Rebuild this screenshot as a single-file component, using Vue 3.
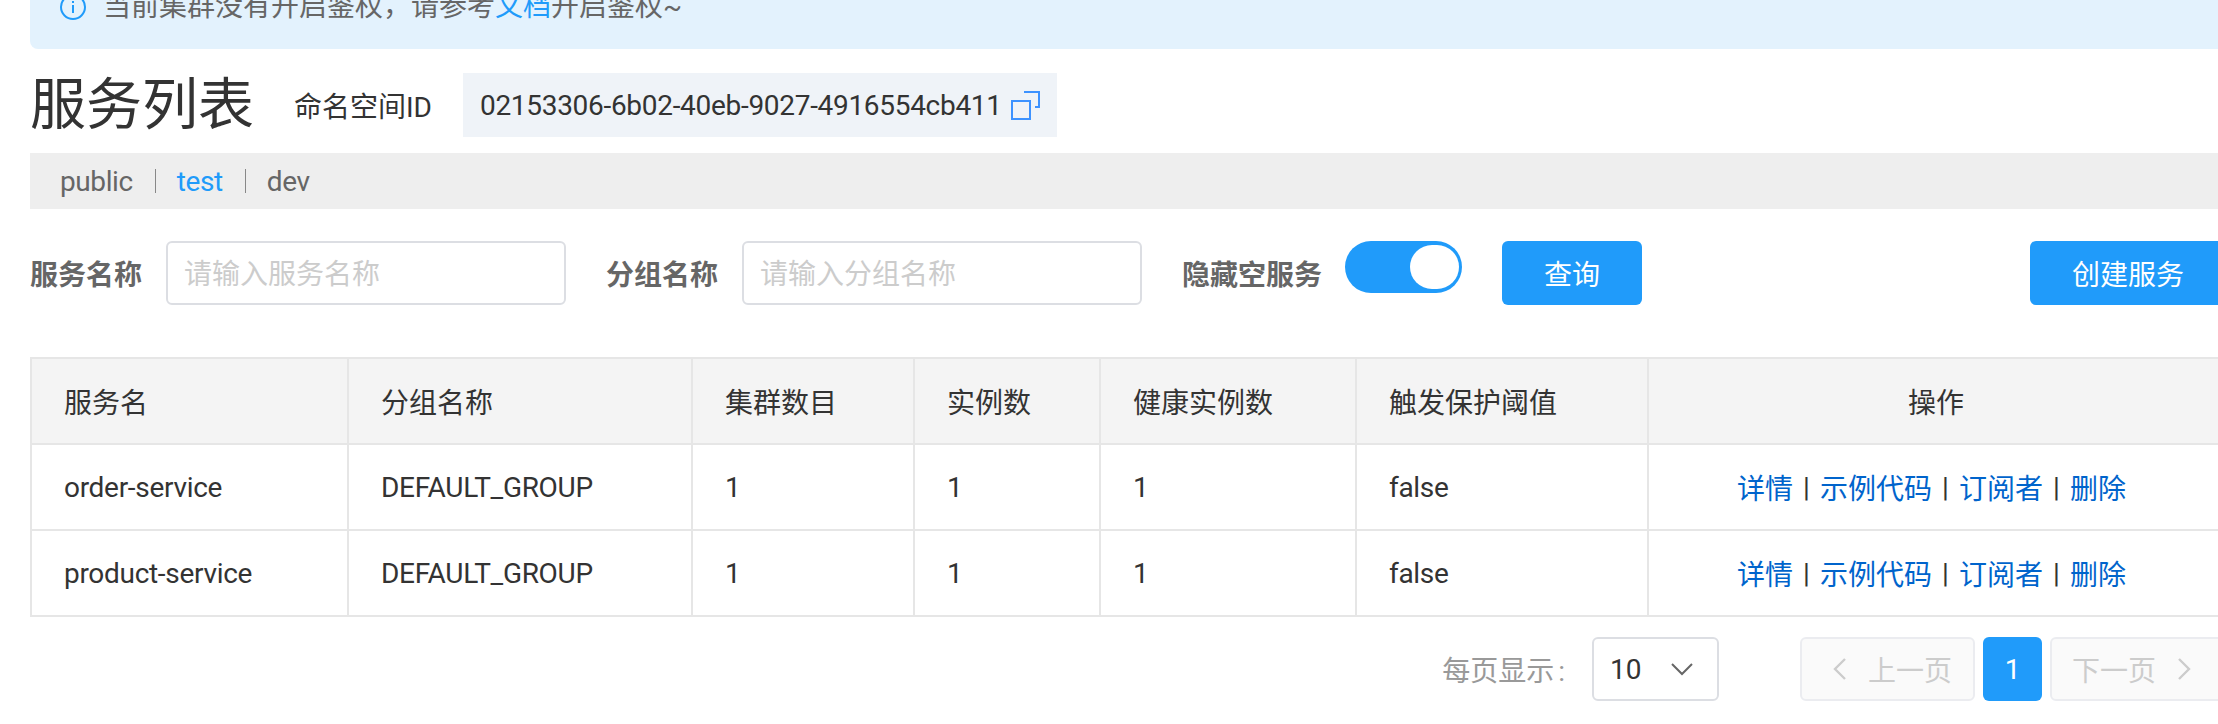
<script setup>
const columns = [
  { label: '服务名', width: 317 },
  { label: '分组名称', width: 344 },
  { label: '集群数目', width: 222 },
  { label: '实例数', width: 186 },
  { label: '健康实例数', width: 256 },
  { label: '触发保护阈值', width: 292 },
  { label: '操作', width: 579, center: true }
]
const rows = [
  { name: 'order-service', group: 'DEFAULT_GROUP', clusters: 1, instances: 1, healthy: 1, threshold: 'false' },
  { name: 'product-service', group: 'DEFAULT_GROUP', clusters: 1, instances: 1, healthy: 1, threshold: 'false' }
]
const ops = ['详情', '示例代码', '订阅者', '删除']
</script>

<template>
  <div class="viewport">
    <div class="page">
      <div class="banner">
        <svg class="info" width="26" height="26" viewBox="0 0 26 26" fill="none" stroke="#209bfa" stroke-width="2">
          <circle cx="13" cy="13" r="12" />
          <path d="M13 11v8M13 7v2" />
        </svg>
        <span>当前集群没有开启鉴权，请参考<a class="doc">文档</a>开启鉴权~</span>
      </div>

      <div class="head">
        <h1 class="title">服务列表</h1>
        <span class="ns-label">命名空间ID</span>
        <div class="ns-box">
          <span class="latin">02153306-6b02-40eb-9027-4916554cb411</span>
          <svg class="copy" width="29" height="30" viewBox="0 0 29 30" fill="none" stroke="#3d92ff" stroke-width="2">
            <path d="M13 2h15v15h-4" />
            <rect x="1" y="11" width="18" height="18" />
          </svg>
        </div>
      </div>

      <div class="tabs">
        <span class="latin-tab">public</span>
        <i class="bar"></i>
        <span class="active latin-tab">test</span>
        <i class="bar"></i>
        <span class="latin-tab">dev</span>
      </div>

      <div class="filters">
        <label class="flabel">服务名称</label>
        <input class="finput" placeholder="请输入服务名称" />
        <label class="flabel second">分组名称</label>
        <input class="finput" placeholder="请输入分组名称" />
        <label class="flabel third">隐藏空服务</label>
        <div class="switch"><span class="knob"></span></div>
        <button class="btn query">查询</button>
        <button class="btn create">创建服务</button>
      </div>

      <div class="table-wrap">
        <table class="table">
          <colgroup>
            <col v-for="c in columns" :key="c.label" :style="{ width: c.width + 'px' }" />
          </colgroup>
          <thead>
            <tr>
              <th v-for="c in columns" :key="c.label" :class="{ center: c.center }">{{ c.label }}</th>
            </tr>
          </thead>
          <tbody>
            <tr v-for="r in rows" :key="r.name">
              <td class="latin">{{ r.name }}</td>
              <td class="latin">{{ r.group }}</td>
              <td>{{ r.clusters }}</td>
              <td>{{ r.instances }}</td>
              <td>{{ r.healthy }}</td>
              <td class="latin">{{ r.threshold }}</td>
              <td class="center">
                <div class="ops">
                  <template v-for="(o, i) in ops" :key="o">
                    <a class="op">{{ o }}</a>
                    <span v-if="i < ops.length - 1" class="sep">|</span>
                  </template>
                </div>
              </td>
            </tr>
          </tbody>
        </table>
      </div>

      <div class="pager">
        <span class="per">每页显示<span class="colon">:</span></span>
        <div class="select">
          <span>10</span>
          <svg width="22" height="14" viewBox="0 0 22 14" fill="none" stroke="#666" stroke-width="2"><path d="M1 2l10 10L21 2" /></svg>
        </div>
        <div class="nav prev">
          <svg width="14" height="24" viewBox="0 0 14 24" fill="none" stroke="#ccc" stroke-width="2.4"><path d="M12 2L2 12l10 10" /></svg>
          <span>上一页</span>
        </div>
        <div class="num">1</div>
        <div class="nav next">
          <span>下一页</span>
          <svg width="14" height="24" viewBox="0 0 14 24" fill="none" stroke="#ccc" stroke-width="2.4"><path d="M2 2l10 10L2 22" /></svg>
        </div>
      </div>
    </div>
  </div>
</template>

<style scoped>
.viewport {
  width: 2218px;
  height: 724px;
  overflow: hidden;
  background: #fff;
  font-family: Roboto, "Noto Sans CJK SC", sans-serif;
  font-size: 28px;
  color: #333;
}
.latin { letter-spacing: -0.3px; }
.latin-tab { letter-spacing: -0.4px; }
.page {
  width: 2196px;
  margin-left: 30px;
  margin-top: -55px;
}
.banner {
  height: 104px;
  box-sizing: border-box;
  padding: 40px 0 0 30px;
  background: #e3f2fd;
  border-radius: 8px;
  display: flex;
  align-items: flex-start;
  gap: 17px;
  color: #666;
  line-height: 44px;
}
.info { margin-top: 9px; flex: none; }
.doc { color: #209bfa; }
.head {
  display: flex;
  align-items: center;
  height: 64px;
  margin-top: 24px;
}
.title {
  margin: 0;
  font-size: 56px;
  font-weight: 400;
  line-height: 64px;
  color: #333;
  width: 264px;
}
.ns-label { width: 169px; }
.ns-box {
  width: 594px;
  height: 64px;
  box-sizing: border-box;
  padding-left: 17px;
  background: #eff3f8;
  display: flex;
  align-items: center;
  gap: 9px;
}
.copy { flex: none; }
.tabs {
  height: 56px;
  margin-top: 16px;
  background: #eee;
  padding-left: 30px;
  display: flex;
  align-items: center;
  color: #666;
}
.bar {
  width: 1px;
  height: 24px;
  background: #888;
  margin: 0 21px 0 22px;
}
.active { color: #209bfa; }
.filters {
  display: flex;
  align-items: center;
  height: 64px;
  margin-top: 32px;
}
.flabel {
  font-weight: 700;
  color: #666;
  width: 136px;
  flex: none;
}
.flabel.second { margin-left: 40px; }
.flabel.third { margin-left: 40px; width: 163px; }
.finput {
  width: 400px;
  height: 64px;
  box-sizing: border-box;
  flex: none;
  border: 2px solid #dcdee3;
  border-radius: 6px;
  padding: 2px 16px 0;
  font: inherit;
  color: #333;
  outline: none;
  background: #fff;
}
.finput::placeholder { color: #ccc; opacity: 1; }
.switch {
  width: 117px;
  height: 52px;
  flex: none;
  align-self: flex-start;
  border-radius: 26px;
  background: #209bfa;
  display: flex;
  justify-content: flex-end;
  align-items: center;
  padding-right: 3px;
  box-sizing: border-box;
}
.knob {
  width: 49px;
  height: 44px;
  border-radius: 22px;
  background: #fff;
}
.btn {
  height: 64px;
  border: 0;
  border-radius: 6px;
  background: #209bfa;
  color: #fff;
  font: inherit;
  padding: 0;
  flex: none;
}
.query { width: 140px; margin-left: 40px; }
.create { width: 196px; margin-left: auto; }
.table-wrap {
  margin-top: 52px;
  border-top: 2px solid #e6e6e6;
  border-left: 2px solid #e6e6e6;
  width: 2196px;
  box-sizing: border-box;
}
.table {
  width: 2194px;
  table-layout: fixed;
  border-collapse: separate;
  border-spacing: 0;
}
th, td {
  border-right: 2px solid #e6e6e6;
  border-bottom: 2px solid #e6e6e6;
  padding: 0 0 0 32px;
  text-align: left;
  font-weight: 400;
  box-sizing: border-box;
  color: #333;
}
th { height: 86px; background: #f4f4f4; }
td { height: 86px; }
th.center { text-align: center; padding: 0 3px 0 0; }
td.center { padding: 0; }
.ops {
  display: flex;
  justify-content: center;
  align-items: center;
  padding-right: 12px;
}
.op { color: #0064cc; }
.sep { width: 27px; text-align: center; color: #333; }
.pager {
  display: flex;
  justify-content: flex-end;
  align-items: center;
  height: 64px;
  margin-top: 20px;
}
.per { color: #999; margin-right: 27px; }
.colon { margin-left: 4px; }
.select {
  width: 127px;
  height: 64px;
  box-sizing: border-box;
  border: 2px solid #dcdee3;
  border-radius: 6px;
  padding: 0 24px 0 16px;
  display: flex;
  align-items: center;
  justify-content: space-between;
  margin-right: 81px;
}
.nav {
  width: 175px;
  height: 64px;
  box-sizing: border-box;
  border: 2px solid #ebecf0;
  border-radius: 6px;
  background: #fafafa;
  color: #ccc;
  display: flex;
  align-items: center;
}
.prev { padding-left: 31px; gap: 21px; }
.next { width: 176px; padding-left: 20px; gap: 21px; }
.num {
  width: 59px;
  height: 64px;
  margin: 0 8px;
  border-radius: 6px;
  background: #209bfa;
  color: #fff;
  display: flex;
  align-items: center;
  justify-content: center;
}
</style>
